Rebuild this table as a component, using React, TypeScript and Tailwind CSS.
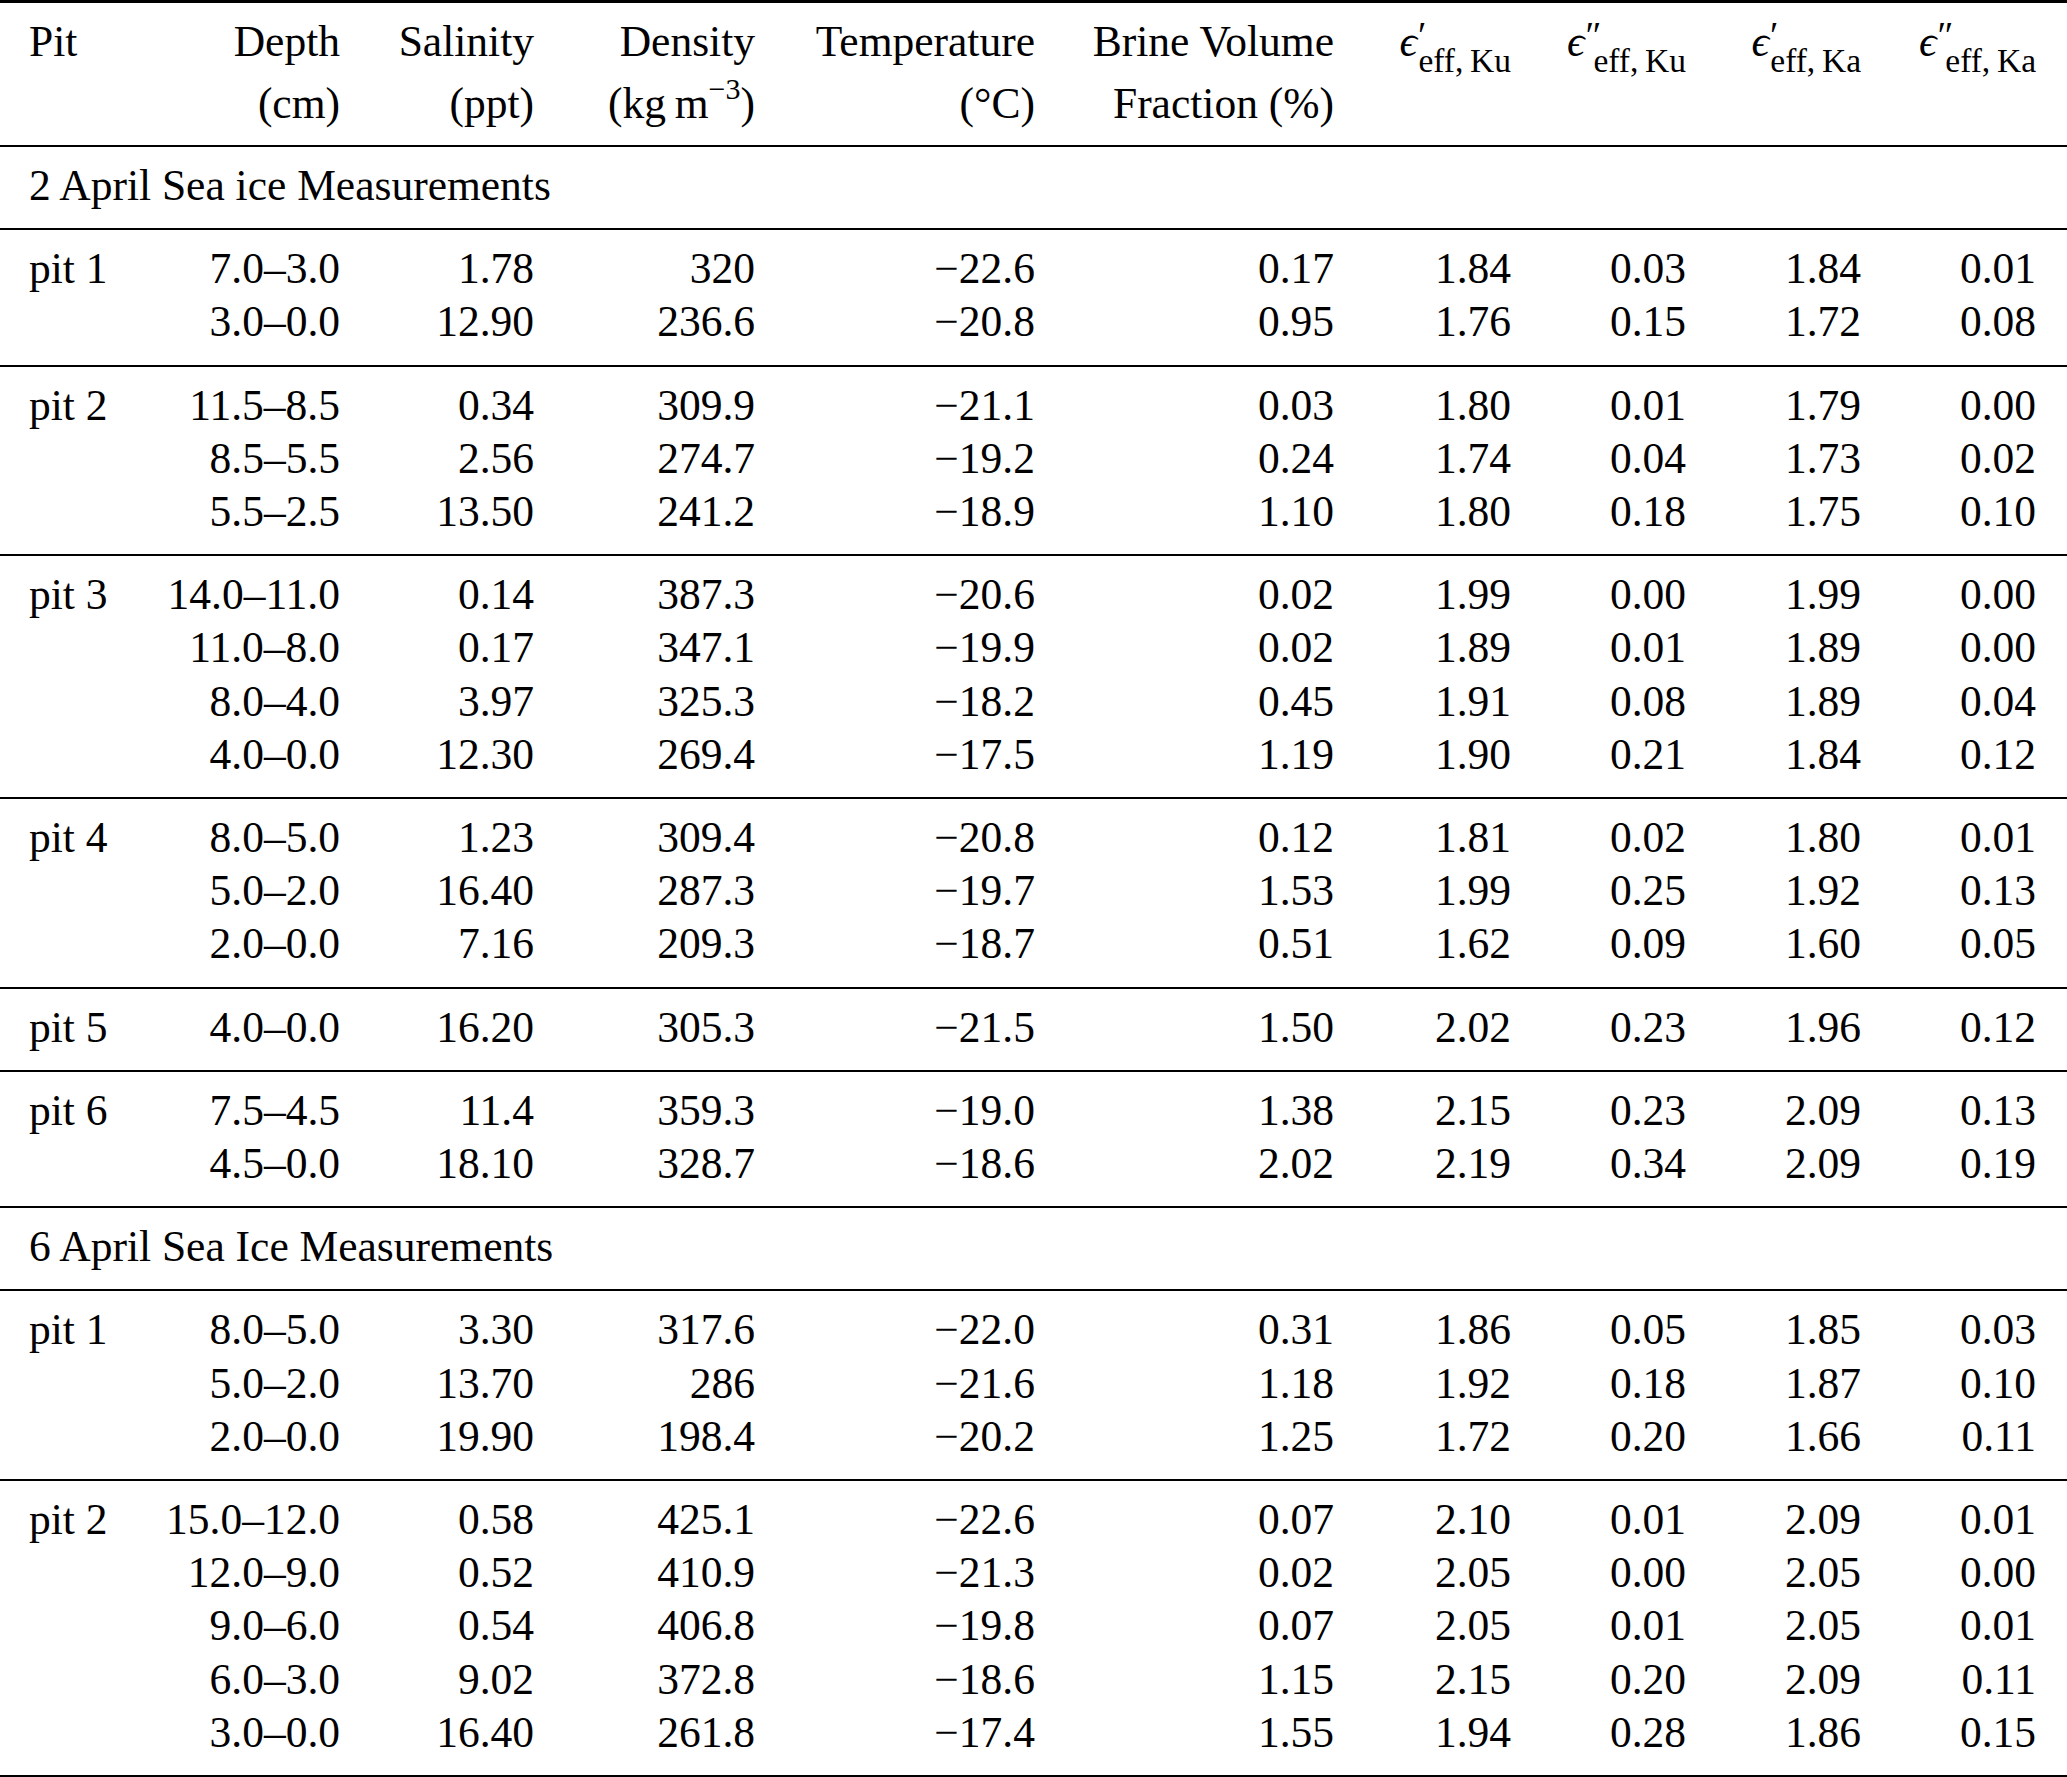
import React from "react";

type Row = [string, string, string, string, string, string, string, string, string];

type Group = { pit: string; rows: Row[] };

type Section = { title: string; groups: Group[] };

const sections: Section[] = [
  {
    title: "2 April Sea ice Measurements",
    groups: [
      {
        pit: "pit 1",
        rows: [
          ["7.0–3.0", "1.78", "320", "−22.6", "0.17", "1.84", "0.03", "1.84", "0.01"],
          ["3.0–0.0", "12.90", "236.6", "−20.8", "0.95", "1.76", "0.15", "1.72", "0.08"],
        ],
      },
      {
        pit: "pit 2",
        rows: [
          ["11.5–8.5", "0.34", "309.9", "−21.1", "0.03", "1.80", "0.01", "1.79", "0.00"],
          ["8.5–5.5", "2.56", "274.7", "−19.2", "0.24", "1.74", "0.04", "1.73", "0.02"],
          ["5.5–2.5", "13.50", "241.2", "−18.9", "1.10", "1.80", "0.18", "1.75", "0.10"],
        ],
      },
      {
        pit: "pit 3",
        rows: [
          ["14.0–11.0", "0.14", "387.3", "−20.6", "0.02", "1.99", "0.00", "1.99", "0.00"],
          ["11.0–8.0", "0.17", "347.1", "−19.9", "0.02", "1.89", "0.01", "1.89", "0.00"],
          ["8.0–4.0", "3.97", "325.3", "−18.2", "0.45", "1.91", "0.08", "1.89", "0.04"],
          ["4.0–0.0", "12.30", "269.4", "−17.5", "1.19", "1.90", "0.21", "1.84", "0.12"],
        ],
      },
      {
        pit: "pit 4",
        rows: [
          ["8.0–5.0", "1.23", "309.4", "−20.8", "0.12", "1.81", "0.02", "1.80", "0.01"],
          ["5.0–2.0", "16.40", "287.3", "−19.7", "1.53", "1.99", "0.25", "1.92", "0.13"],
          ["2.0–0.0", "7.16", "209.3", "−18.7", "0.51", "1.62", "0.09", "1.60", "0.05"],
        ],
      },
      {
        pit: "pit 5",
        rows: [["4.0–0.0", "16.20", "305.3", "−21.5", "1.50", "2.02", "0.23", "1.96", "0.12"]],
      },
      {
        pit: "pit 6",
        rows: [
          ["7.5–4.5", "11.4", "359.3", "−19.0", "1.38", "2.15", "0.23", "2.09", "0.13"],
          ["4.5–0.0", "18.10", "328.7", "−18.6", "2.02", "2.19", "0.34", "2.09", "0.19"],
        ],
      },
    ],
  },
  {
    title: "6 April Sea Ice Measurements",
    groups: [
      {
        pit: "pit 1",
        rows: [
          ["8.0–5.0", "3.30", "317.6", "−22.0", "0.31", "1.86", "0.05", "1.85", "0.03"],
          ["5.0–2.0", "13.70", "286", "−21.6", "1.18", "1.92", "0.18", "1.87", "0.10"],
          ["2.0–0.0", "19.90", "198.4", "−20.2", "1.25", "1.72", "0.20", "1.66", "0.11"],
        ],
      },
      {
        pit: "pit 2",
        rows: [
          ["15.0–12.0", "0.58", "425.1", "−22.6", "0.07", "2.10", "0.01", "2.09", "0.01"],
          ["12.0–9.0", "0.52", "410.9", "−21.3", "0.02", "2.05", "0.00", "2.05", "0.00"],
          ["9.0–6.0", "0.54", "406.8", "−19.8", "0.07", "2.05", "0.01", "2.05", "0.01"],
          ["6.0–3.0", "9.02", "372.8", "−18.6", "1.15", "2.15", "0.20", "2.09", "0.11"],
          ["3.0–0.0", "16.40", "261.8", "−17.4", "1.55", "1.94", "0.28", "1.86", "0.15"],
        ],
      },
    ],
  },
];

// column widths line up the right edges with the reference
const grid = "grid grid-cols-[150px_190px_194px_221px_280px_299px_177px_175px_175px_175px] pr-[31px]";

function Eps({ primes, band }: { primes: string; band: string }) {
  return (
    <span className="whitespace-nowrap">
      <span className="italic">ϵ</span>
      <span className="text-[38px] leading-none align-[8px] ml-[1px] mr-[-8px]">{primes}</span>
      <span className="text-[33.5px] leading-none align-[-16px]">eff,&thinsp;{band}</span>
    </span>
  );
}

function Rule({ thick }: { thick?: boolean }) {
  return <div className={thick ? "h-[3px] bg-black" : "h-[2px] bg-black"} />;
}

export default function App() {
  return (
    <div
      className="w-[2067px] h-[1777px] bg-white text-black text-[43.5px]"
      style={{ fontFamily: '"Liberation Serif", "Times New Roman", serif' }}
    >
      <Rule thick />
      <div className={`${grid} pt-[7px] pb-[11px] leading-[62px]`}>
        <div className="pl-[29px] text-left">Pit</div>
        <div className="text-right">
          Depth
          <br />
          (cm)
        </div>
        <div className="text-right">
          Salinity
          <br />
          (ppt)
        </div>
        <div className="text-right">
          Density
          <br />
          (kg&thinsp;m<span className="text-[30px] leading-none align-[19px]">−3</span>)
        </div>
        <div className="text-right">
          Temperature
          <br />
          (°C)
        </div>
        <div className="text-right">
          Brine Volume
          <br />
          Fraction (%)
        </div>
        <div className="text-right">
          <Eps primes="′" band="Ku" />
        </div>
        <div className="text-right">
          <Eps primes="″" band="Ku" />
        </div>
        <div className="text-right">
          <Eps primes="′" band="Ka" />
        </div>
        <div className="text-right">
          <Eps primes="″" band="Ka" />
        </div>
      </div>
      <Rule />
      {sections.map((s) => (
        <React.Fragment key={s.title}>
          <div className="pt-[12px] pb-[16px] pl-[29px] leading-[53.2px]">{s.title}</div>
          <Rule />
          {s.groups.map((g, gi) => (
            <React.Fragment key={g.pit}>
              <div className="pt-[12px] pb-[16px] leading-[53.2px]">
                {g.rows.map((r, i) => (
                  <div key={i} className={grid}>
                    <div className="pl-[29px] text-left">{i === 0 ? g.pit : ""}</div>
                    {r.map((c, ci) => (
                      <div key={ci} className="text-right">
                        {c}
                      </div>
                    ))}
                  </div>
                ))}
              </div>
              <Rule thick={s.title.startsWith("6") && gi === s.groups.length - 1} />
            </React.Fragment>
          ))}
        </React.Fragment>
      ))}
    </div>
  );
}
